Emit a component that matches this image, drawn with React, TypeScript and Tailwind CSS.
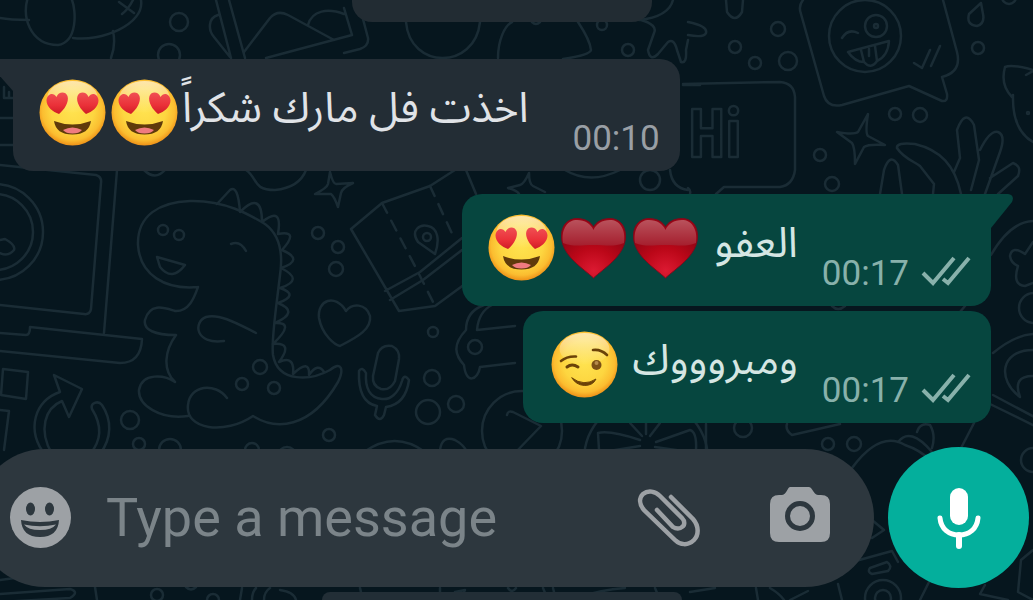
import React from 'react';

type EmojiKind = 'love' | 'heart' | 'wink';

interface Message {
  id: number;
  text: string;
  emojis: EmojiKind[];
  time: string;
  outgoing: boolean;
  tail: boolean;
}

const MESSAGES: Message[] = [
  { id: 1, text: 'اخذت فل مارك شكراً', emojis: ['love', 'love'], time: '00:10', outgoing: false, tail: true },
  { id: 2, text: 'العفو ', emojis: ['heart', 'heart', 'love'], time: '00:17', outgoing: true, tail: true },
  { id: 3, text: 'ومبروووك ', emojis: ['wink'], time: '00:17', outgoing: true, tail: false },
];

// [cx, cy, r] of the loose bubbles in the wallpaper
const DOTS = [
  [179, 22, 9], [169, 55, 11], [163, 230, 5], [179, 235, 5], [260, 367, 7], [242, 384, 6], [274, 388, 6],
  [130, 420, 9], [139, 444, 6], [170, 450, 11], [252, 450, 7], [287, 456, 9], [329, 435, 6], [318, 233, 6],
  [338, 247, 6], [336, 269, 7], [433, 332, 5], [432, 378, 8], [428, 412, 12], [456, 404, 8], [427, 237, 4],
  [475, 347, 7], [522, 431, 40], [602, 25, 5], [628, 50, 6], [650, 180, 10], [778, 29, 7], [735, 47, 6],
  [755, 63, 6], [788, 61, 9], [895, 114, 6], [920, 115, 7], [820, 155, 6], [832, 184, 7], [978, 48, 6],
  [1009, -3, 7], [865, 36, 36], [876, 26, 11], [876, 26, 2], [1034, 308, 15], [743, 428, 9], [828, 444, 6],
  [854, 444, 7], [1033, 460, 12], [883, 598, 18], [883, 598, 8], [157, 595, 6], [213, 600, 6], [-5, 232, 48],
  [-5, 232, 38], [1028, 113, 1], [646, 460, 62],
];

const DOODLES = [
  // dog and envelope
  'M0 18C10 20 20 20 29 20M29 -5C20 15 30 45 58 45C78 42 76 10 72 0M73 38C100 42 145 25 141 0M119 2L134 13M133 0C130 6 126 11 122 14M113 31C115 40 114 50 111 58',
  'M216 0L231 58M229 0L245 58M218 15C208 18 208 30 214 37L230 57M244 52L270 18C276 11 282 12 288 15L334 40M308 25C312 10 328 8 344 14M266 58L352 35L344 8M358 0L368 38Q369 46 360 49L344 53',
  'M0 118H13M0 145H13M4 87V98H13M9 92V98',
  // laptop
  'M0 165L96 175Q102 177 101 183L91 309Q90 315 84 314L0 305M117 170L104 333M0 333L26 335Q30 335 30 327L142 339Q141 363 120 363L0 351M0 240L5 239Q16 245 14 250Q8 257 0 253',
  'M3 369L28 372L26 399L1 395ZM0 410L9 411L4 450',
  'M46 456C25 430 35 400 60 392L54 375L82 389L69 417L62 401C45 408 38 430 52 454M100 454C112 438 112 420 102 405C98 400 90 403 92 409C102 425 102 440 90 454',
  // dinosaur
  'M198 287C165 290 140 275 138 245C137 215 160 202 190 201C225 200 250 215 265 224C280 235 283 255 280 275C276 310 271 340 273 355C278 384 312 380 330 370C342 360 344 370 338 382C310 430 275 430 253 416C225 435 185 430 188 405C190 385 215 382 227 398M188 416C160 420 138 405 139 390C142 372 165 375 175 382C162 370 165 350 176 335C155 335 143 330 145 320C150 302 165 308 175 311C190 312 195 295 198 287',
  'M256 333C240 325 220 313 206 317C193 322 195 345 224 341M157 257L185 265Q172 282 160 267ZM231 244Q240 240 246 251',
  'M217 204L230 190Q238 184 240 212Q262 190 262 222Q283 205 278 234Q300 230 282 250Q305 260 281 268Q305 280 280 288Q300 295 278 303Q300 312 275 323Q296 322 273 344Q294 342 279 362Q295 355 293 374Q310 358 309 375Q318 362 324 372',
  'M246 170C258 178 252 190 275 190C295 188 303 178 306 170M144 170Q155 181 165 170',
  // sparkles
  'M330 172Q333 184 336 184L353 183Q342 188 341 193L338 207Q334 196 331 194L315 194Q327 188 328 184Z',
  'M529 173Q524 184 520 185L508 188Q518 191 519 194M529 173Q529 184 533 186L545 192',
  'M868 114Q865 133 868 136L885 145Q868 144 864 147L855 164Q855 147 852 143L837 132Q854 135 858 132Z',
  // heart and microphone
  'M346 311C335 293 317 300 319 318C322 335 335 345 340 346C355 338 372 330 370 316C366 303 352 303 346 311Z',
  'M378 353Q382 344 392 346Q400 350 399 359L395 381Q390 391 381 389Q372 386 373 376ZM359 371C358 395 366 404 377 406L375 415Q380 423 384 415L386 407C400 405 407 395 409 380Q404 373 402 381C398 394 390 400 382 399C370 398 365 388 366 373Q362 366 359 371',
  // map
  'M382 203L351 229L399 311L435 306L465 284M382 203L430 186L458 168M385 291L420 272L462 238M390 300L423 280L462 250M435 254L418 242C410 230 420 224 428 226C438 228 440 240 435 254M466 170L476 194',
  // camper van
  'M484 305C470 310 466 320 466 330C452 345 455 355 464 365C466 385 478 380 480 367L515 363M477 330L515 326M477 330C478 318 482 310 492 305',
  'M507 415Q508 410 513 412L541 426L514 454M364 452Q395 430 425 452M440 450Q442 435 455 440Q464 445 467 452',
  'M599 450L598 433Q610 430 640 440M642 436L630 423M650 436L660 423M646 434V423M656 442L690 430Q697 432 696 450M603 452L640 446M655 447L690 452M706 424V450',
  'M406 22C410 70 475 70 480 22M498 58C498 40 505 25 512 22M578 22Q590 40 591 50Q590 55 563 59M532 22Q536 26 540 22',
  'M639 20C658 18 670 12 673 0M641 20Q658 25 654 33L648 50Q650 62 658 54L668 42Q674 38 677 50L681 62Q687 64 686 50L688 40M565 170Q590 185 620 170M670 170Q672 188 688 190M683 85H700',
  'M726 0L727 12Q735 24 742 12L743 0M688 22Q708 26 706 33Q704 38 688 35',
  // winking sticker
  'M803 0Q798 6 801 14L824 96Q828 108 842 105L909 86L942 101Q948 102 947 94L942 77Q962 72 957 52L943 0M842 38Q848 28 858 33M848 52L889 41Q888 56 877 61Q871 70 864 62Q855 62 848 52M861 50L864 62M875 46L877 61M869 49V56M914 63L922 68L930 50M931 66L940 46',
  'M683 84L780 82Q794 83 795 97V170Q793 185 780 187H724L716 194M688 188Q691 190 690 194',
  // hand
  'M880 194L884 170Q890 152 898 165L902 194M897 148Q896 142 915 144C940 150 955 165 961 194M897 148C903 158 915 162 920 166L934 184L933 194M954 172L960 158L957 130Q965 108 974 125L979 160L971 190M980 150Q990 130 998 132Q1006 135 1000 152L985 194M990 178L1013 163Q1022 166 1018 176L998 194',
  'M981 3L969 14Q966 25 977 26Q985 24 983 14ZM1033 70Q1012 64 1005 67Q1000 85 1012 97M1013 95Q1012 130 1033 142M1026 75L1033 71',
  'M991 255Q1010 222 1033 221M1033 242L1025 254Q1012 245 1010 256Q1011 263 1018 266Q1012 285 1025 286L1033 283M993 353Q1015 335 1033 334M1033 350C1000 350 997 380 1020 397Q1012 376 1033 376M993 395L1040 420M990 404L1035 426M965 306L960 312M832 306Q838 312 845 306',
  'M787 424Q785 430 792 435L840 424M852 468Q880 430 905 445Q920 450 930 460M898 442Q910 426 932 452M917 432Q920 422 930 425Q936 435 932 448M974 423L960 450M872 520L884 530L872 538',
  'M852 562L892 551L898 562M870 568L887 562Q893 566 888 571L872 574Q867 572 870 568M838 584L842 600M930 580L920 600M1033 550L1021 560L1018 592L1033 600M985 585L980 594L1008 600',
  'M0 580L15 578M0 594L70 589Q80 592 70 598L0 602M95 587L97 600M240 600L242 588M252 600Q252 592 256 588M264 600Q264 592 270 588M280 590Q294 592 296 600M186 587Q191 592 196 587',
  'M360 588Q362 594 360 600M440 588V600M455 592L465 590L460 600M508 588Q512 594 516 588M543 588L548 600M553 588L556 600M580 597Q600 590 625 588M655 588L660 600M690 592L715 588M756 588L758 600M770 588Q780 594 784 600M808 591L790 600',
];

// Wallpaper behind the chat; also holds the gradients used by the emojis
const Wallpaper: React.FC = () => (
  <svg
    className="absolute inset-0 h-full w-full"
    viewBox="0 0 1033 600"
    preserveAspectRatio="xMinYMin slice"
    fill="none"
    stroke="#1a2c35"
    strokeWidth="2.5"
    strokeLinejoin="round"
    strokeLinecap="round"
    aria-hidden="true"
  >
    <defs>
      <radialGradient id="face" cx="50%" cy="46%" r="54%">
        <stop offset="0" stopColor="#ffe350" />
        <stop offset="0.6" stopColor="#fdd640" />
        <stop offset="0.85" stopColor="#fbbd30" />
        <stop offset="1" stopColor="#ee9118" />
      </radialGradient>
      <linearGradient id="shine" x1="0" y1="0" x2="0" y2="1">
        <stop offset="0" stopColor="#fff" stopOpacity="0.6" />
        <stop offset="1" stopColor="#fff" stopOpacity="0" />
      </linearGradient>
      <linearGradient id="eye-heart" x1="0" y1="0" x2="0" y2="1">
        <stop offset="0" stopColor="#f05054" />
        <stop offset="0.6" stopColor="#ea3038" />
        <stop offset="1" stopColor="#cf1c26" />
      </linearGradient>
      <radialGradient id="heart-base" cx="50%" cy="88%" r="62%">
        <stop offset="0" stopColor="#dc1a32" />
        <stop offset="0.6" stopColor="#bb0718" />
        <stop offset="1" stopColor="#9a0515" />
      </radialGradient>
      <linearGradient id="heart-gloss" x1="0" y1="0" x2="0" y2="1">
        <stop offset="0" stopColor="#b9525c" />
        <stop offset="1" stopColor="#a51f2e" />
      </linearGradient>
    </defs>
    {DOTS.map(([cx, cy, r], i) => (
      <circle key={i} cx={cx} cy={cy} r={r} />
    ))}
    {DOODLES.map((d) => (
      <path key={d} d={d} />
    ))}
    <path d="M382 203L418 272L435 306M430 186L455 240" strokeDasharray="11 9" />
    <text x="688" y="157" fontFamily='"Liberation Sans Narrow", "Open Sans Condensed", "DejaVu Sans Condensed", sans-serif' fontWeight="700" fontSize="66">Hi</text>
  </svg>
);

const LoveEyes: React.FC = () => (
  <>
    <path d="M20 35C14 33 7.500 28 7.500 21.500C8 14.500 14.500 13 17.500 18C19.500 12.500 26.500 12 28.500 17C30.500 23 25 31 20 35Z" fill="url(#eye-heart)" />
    <path d="M47 35C53 33 59.500 28 59.500 21.500C59 14.500 52.500 13 49.500 18C47.500 12.500 40.500 12 38.500 17C36.500 23 42 31 47 35Z" fill="url(#eye-heart)" />
    <path d="M15 42Q33.500 49 52 42Q50 55.500 33.500 55.500Q17 55.500 15 42Z" fill="#5f3a0b" />
    <path d="M24 51Q33.500 46 43 51Q40 54.500 33.500 54.500Q27 54.500 24 51Z" fill="#ef7b80" />
  </>
);

const WinkEyes: React.FC = () => (
  <g fill="none" stroke="#6b4208" strokeWidth="2.600" strokeLinecap="round">
    <path d="M10 30Q16 25 25 25.500" />
    <path d="M16 36Q21 32 27 36" strokeWidth="3" />
    <path d="M42 19Q50 18 56 24" />
    <path d="M21 47Q33 56 45 48Q42 54.500 33.500 54.500Q25 54 21 47Z" fill="#6b4208" strokeWidth="1" />
    <circle cx="45.500" cy="34" r="5" fill="#7a5016" stroke="none" />
    <circle cx="45.500" cy="32" r="2" fill="#b48a4c" stroke="none" />
  </g>
);

const Emoji: React.FC<{ kind: EmojiKind }> = ({ kind }) => {
  if (kind === 'heart') {
    return (
      <svg className="h-[67px] w-[67px]" viewBox="0 0 67 67" role="img" aria-label="❤">
        <path
          d="M33.500 64C24 55 2 42 1.500 23C1 10 9 4.500 17 4.500C25 4.500 31 8 33.500 13C36 8 42 4.500 50 4.500C58 4.500 66 10 65.500 23C65 42 43 55 33.500 64Z"
          fill="url(#heart-base)"
          stroke="#7c0a1c"
          strokeWidth="1"
        />
        <path d="M3 29C1 14 8 6 17 6C25 6 31 10 33.500 16C36 10 42 6 50 6C59 6 66 14 64 29C54 33 46 31 33.500 31C21 31 13 33 3 29Z" fill="url(#heart-gloss)" />
      </svg>
    );
  }
  return (
    <svg className="h-[67px] w-[67px]" viewBox="0 0 67 67" role="img" aria-label={kind === 'love' ? '😍' : '😉'}>
      <circle cx="33.500" cy="33.500" r="33" fill="url(#face)" />
      <ellipse cx="33.500" cy="18" rx="25" ry="16" fill="url(#shine)" />
      {kind === 'love' ? <LoveEyes /> : <WinkEyes />}
    </svg>
  );
};

const Ticks: React.FC = () => (
  <svg className="mb-1.5 h-8 w-[50px]" viewBox="0 0 50 32" fill="none" stroke="currentColor" strokeWidth="4" role="img" aria-label="Delivered">
    <path d="M2 17L12 27L33 2M22 23L27 27L48 2" />
  </svg>
);

const Bubble: React.FC<{ message: Message }> = ({ message }) => {
  const { text, emojis, time, outgoing, tail } = message;
  return (
    <li
      className={
        outgoing
          ? `relative flex items-end gap-6 self-end rounded-[20px] bg-[#06463f] py-5 pr-5 text-[#d5e6e3] ${tail ? 'mt-[23px] rounded-tr-none pl-[26px]' : 'mt-[5px] pl-7'}`
          : 'relative flex items-end gap-11 self-start rounded-[20px] rounded-tl-none bg-[#232d35] py-5 pr-5 pl-[26px] text-[#e0e3e7]'
      }
    >
      {tail && outgoing && (
        <svg className="absolute top-0 left-full h-9 w-6" viewBox="0 0 24 36" fill="#06463f" aria-hidden="true">
          <path d="M-1 0H17Q24 1 21 8L0 34H-1Z" />
        </svg>
      )}
      {tail && !outgoing && (
        <svg className="absolute top-0 right-full h-9 w-6" viewBox="0 0 24 36" fill="#232d35" aria-hidden="true">
          <path d="M25 0H7Q0 1 3 8L24 32H25Z" />
        </svg>
      )}
      <div dir="rtl" className="flex h-[72px] items-start gap-1">
        <p className="font-['Noto_Sans_Arabic','Noto_Naskh_Arabic','DejaVu_Sans',sans-serif] text-[42px] leading-[60px] whitespace-pre">{text}</p>
        <span className="flex gap-[5px]">
          {emojis.map((kind, i) => (
            <Emoji key={i} kind={kind} />
          ))}
        </span>
      </div>
      <div className={`-mb-2 flex items-end gap-3 ${outgoing ? 'text-[#88b1ab]' : 'text-[#999fa5]'}`}>
        <time className="text-[35px] leading-10">{time}</time>
        {outgoing && <Ticks />}
      </div>
    </li>
  );
};

const Composer: React.FC = () => (
  <form className="mt-6 flex items-center gap-[14px] pr-1" onSubmit={(e) => e.preventDefault()}>
    <div className="-ml-6 flex h-[138px] min-w-0 flex-1 items-center rounded-full bg-[#2d373e] pr-11 pl-[34px] text-[#9da1a5]">
      <button type="button" aria-label="Emoji" className="shrink-0">
        <svg className="h-[61px] w-[61px]" viewBox="0 0 61 61">
          <circle cx="30.500" cy="30.500" r="30.500" fill="currentColor" />
          <g fill="#2d373e">
            <ellipse cx="20.500" cy="22" rx="4.500" ry="6.500" />
            <ellipse cx="39.500" cy="22" rx="4.500" ry="6.500" />
            <path d="M11 33Q30 37 49 33Q48 50 30 50Q12 50 11 33Z" />
          </g>
          <path d="M14 37.500Q30 41 46 37.500Q42 43 30 43Q18 43 14 37.500Z" fill="currentColor" />
        </svg>
      </button>
      <input
        type="text"
        aria-label="Type a message"
        placeholder="Type a message"
        className="ml-[35px] min-w-0 flex-1 bg-transparent text-[54px] leading-[64px] outline-none placeholder:text-[#7b8489]"
      />
      <button type="button" aria-label="Attach" className="shrink-0">
        <svg className="h-[60px] w-[66px]" viewBox="636 487 66 60" fill="none" stroke="currentColor" strokeWidth="4.500" strokeLinecap="round">
          <path d="M671 496L693 518C699 525 699 534 694 539C688 545 680 544 675 539L644 509C639 503 639 497 643 493C648 489 655 490 660 495L682 517C685 520 685 524 682 526C680 528 676 528 673 526L657 509" />
        </svg>
      </button>
      <button type="button" aria-label="Camera" className="mb-2 ml-[68px] shrink-0">
        <svg className="h-14 w-[60px]" viewBox="0 0 60 56">
          <path d="M20 1H39C43 2 43 8 48 9H51Q60 9 60 18V47Q60 56 51 56H9Q0 56 0 47V18Q0 9 9 9H12C17 8 17 2 20 1Z" fill="currentColor" />
          <circle cx="30" cy="30" r="12.500" fill="none" stroke="#2d373e" strokeWidth="5" />
        </svg>
      </button>
    </div>
    <button type="button" aria-label="Record voice message" className="flex h-[141px] w-[141px] shrink-0 items-center justify-center rounded-full bg-[#04af9c]">
      <svg className="h-[62px] w-[46px]" viewBox="0 0 46 62" fill="none" stroke="#fff" strokeWidth="6" strokeLinecap="round">
        <rect x="14" y="1" width="18" height="37" rx="9" fill="#fff" stroke="none" />
        <path d="M4 31C5 42 13 48 23 48C33 48 41 42 42 31" strokeWidth="5" />
        <path d="M23 48V59" />
      </svg>
    </button>
  </form>
);

const App: React.FC = () => {
  return (
    <div className="relative flex h-screen flex-col overflow-hidden bg-[#06161e] font-[Roboto,sans-serif]">
      <Wallpaper />
      <main className="relative flex flex-col">
        <div className="flex flex-col pr-[42px] pl-[13px]">
          <div className="h-[22px] w-[300px] self-center rounded-b-[20px] bg-[#222c33]" />
          <ul className="mt-[37px] flex flex-col">
            {MESSAGES.map((message) => (
              <Bubble key={message.id} message={message} />
            ))}
          </ul>
        </div>
        <Composer />
        <div className="mt-1 flex justify-center pr-[42px] pl-[13px]">
          <div className="h-3 w-[360px] rounded-t-lg bg-[#222e36]" />
        </div>
      </main>
    </div>
  );
};

export default App;
